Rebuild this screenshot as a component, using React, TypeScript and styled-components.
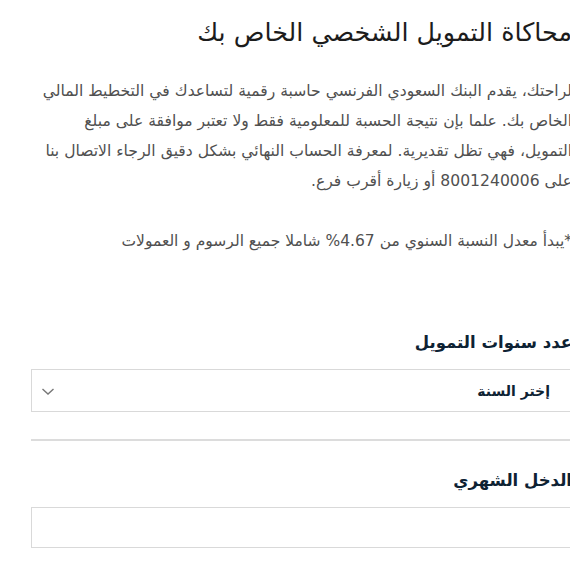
import { createGlobalStyle, styled } from "styled-components";

const GlobalStyle = createGlobalStyle`
  html, body {
    margin: 0;
    padding: 0;
    background: #fff;
    overflow: hidden;
  }
  body {
    font-family: "DejaVu Sans", "Noto Sans", sans-serif;
  }
`;

// Page wrapper, a little wider than the window so the right edge is clipped
const Page = styled.div`
  direction: rtl;
  width: 541px;
  margin-left: 31px;
  padding-top: 12px;
`;

const Title = styled.h1`
  margin: 0;
  font-size: 25.4px;
  font-weight: 400;
  line-height: 40px;
  color: #1c1c1c;
  white-space: nowrap;
`;

const Intro = styled.p`
  margin: 24px 0 0;
  font-size: 15.6px;
  line-height: 30px;
  color: #505050;
`;

const Line = styled.span`
  display: block;
  white-space: nowrap;
`;

const Note = styled.p`
  margin: 30px 0 0;
  font-size: 15.5px;
  line-height: 30px;
  color: #505050;
`;

const Field = styled.div<{ $gap: number }>`
  margin-top: ${(p) => p.$gap}px;
  display: flex;
  flex-direction: column;
`;

const Label = styled.label`
  font-size: 16.5px;
  font-weight: 700;
  line-height: 26px;
  color: #0e2233;
  white-space: nowrap;
`;

const Box = styled.div<{ $h: number }>`
  margin-top: 13px;
  height: ${(p) => p.$h}px;
  border: 1px solid #d9d9d9;
  box-sizing: border-box;
  display: flex;
  align-items: center;
  justify-content: space-between;
  padding: 0 21px 0 9px;
`;

const SelectText = styled.span`
  font-size: 14px;
  font-weight: 700;
  color: #0e2233;
`;

const Chevron = styled.svg`
  width: 14px;
  height: 10px;
  display: block;
`;

const Divider = styled.hr`
  margin: 27px 0 0;
  border: 0;
  border-top: 2px solid #dcdcdc;
`;

export default function App() {
  return (
    <>
      <GlobalStyle />
      <Page>
        <Title>محاكاة التمويل الشخصي الخاص بك</Title>
        <Intro>
          <Line>لراحتك، يقدم البنك السعودي الفرنسي حاسبة رقمية لتساعدك في التخطيط المالي</Line>
          <Line>الخاص بك. علما بإن نتيجة الحسبة للمعلومية فقط ولا تعتبر موافقة على مبلغ</Line>
          <Line>التمويل، فهي تظل تقديرية. لمعرفة الحساب النهائي بشكل دقيق الرجاء الاتصال بنا</Line>
          <Line>على 8001240006 أو زيارة أقرب فرع.</Line>
        </Intro>
        <Note>*يبدأ معدل النسبة السنوي من 4.67% شاملا جميع الرسوم و العمولات</Note>

        <Field $gap={74}>
          <Label>عدد سنوات التمويل</Label>
          <Box $h={43}>
            <SelectText>إختر السنة</SelectText>
            <Chevron viewBox="0 0 14 10">
              <path d="M1.5 3 L7 8 L12.5 3" fill="none" stroke="#777" strokeWidth="1.4" />
            </Chevron>
          </Box>
        </Field>

        <Divider />

        <Field $gap={27}>
          <Label>الدخل الشهري</Label>
          <Box $h={41} />
        </Field>
      </Page>
    </>
  );
}
